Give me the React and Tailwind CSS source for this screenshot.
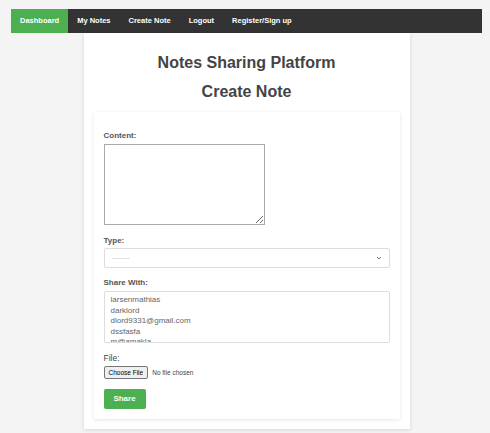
export default function App() {
  const users = ['larsenmathias', 'darklord', 'dlord9331@gmail.com', 'dssfasfa', 'm@amakla'];
  const links = ['Dashboard', 'My Notes', 'Create Note', 'Logout', 'Register/Sign up'];

  return (
    <div className="min-h-screen bg-[#f4f4f4] pl-[11px] pr-[8px] pt-[9px] font-['Liberation_Sans',Arial,sans-serif]">
      <nav className="flex h-[24px] bg-[#333] text-[7.5px] font-bold text-white">
        {links.map((l, i) => (
          <a
            key={l}
            className={i === 0 ? 'flex items-center bg-[#4caf50] px-[9px]' : 'flex items-center px-[9px]'}
          >
            {l}
          </a>
        ))}
      </nav>

      <div className="mx-auto w-[326px] bg-white px-[10px] pb-[10px] pt-[21px] shadow-[0_1px_4px_rgba(0,0,0,0.12)]">
        <h1 className="text-center text-[16px] font-bold leading-[18px] text-[#444]">Notes Sharing Platform</h1>
        <h2 className="mt-[11px] text-center text-[16px] font-bold leading-[18px] text-[#444]">Create Note</h2>

        <form className="mt-[11px] bg-white px-[10px] pb-[10px] pt-[19px] shadow-[0_1px_4px_rgba(0,0,0,0.1)]">
          <label className="block text-[8px] font-bold leading-[10px] text-[#555]">Content:</label>
          <textarea className="mt-[3px] block h-[81px] w-[161px] resize border border-[#aaa] bg-white" />

          <label className="mt-[11px] block text-[8px] font-bold leading-[10px] text-[#555]">Type:</label>
          <div className="mt-[2px] flex h-[20px] w-full items-center justify-between rounded-[2px] border border-[#ddd] bg-white px-[7px]">
            <span className="text-[6px] text-[#aaa]">---------</span>
            <svg width="6" height="4" viewBox="0 0 6 4" className="text-[#777]">
              <path d="M1 1l2 2 2-2" fill="none" stroke="currentColor" strokeWidth="1" />
            </svg>
          </div>

          <label className="mt-[10px] block text-[8px] font-bold leading-[10px] text-[#555]">Share With:</label>
          <div className="mt-[3px] h-[52px] w-full overflow-hidden rounded-[2px] border border-[#ddd] bg-white px-[6px] pt-[3px]">
            {users.map((u) => (
              <div key={u} className="text-[8px] leading-[10.5px] text-[#666]">{u}</div>
            ))}
          </div>

          <label className="mt-[10px] block text-[8.5px] leading-[10px] text-[#444]">File:</label>
          <div className="mt-[3px] flex items-center gap-[4px] text-[6.5px] text-[#444]">
            <span className="rounded-[2px] border border-[#767676] bg-[#efefef] px-[4px] py-[1.5px] leading-[8px] text-black">Choose File</span>
            <span>No file chosen</span>
          </div>

          <button type="button" className="mt-[10px] block h-[20px] w-[42px] rounded-[2px] bg-[#4caf50] text-[8px] font-bold text-white">
            Share
          </button>
        </form>
      </div>
    </div>
  );
}
